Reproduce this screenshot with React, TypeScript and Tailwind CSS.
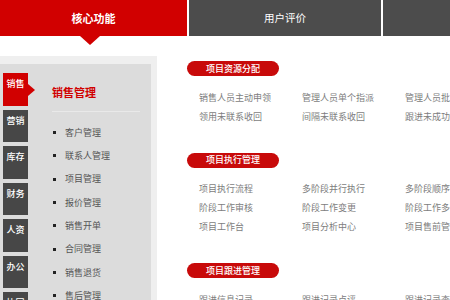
import React from "react";

const tabs = ["销售", "营销", "库存", "财务", "人资", "办公", "协同"];
const items = ["客户管理", "联系人管理", "项目管理", "报价管理", "销售开单", "合同管理", "销售退货", "售后管理"];

const sections: { title: string; rows: string[][] }[] = [
  {
    title: "项目资源分配",
    rows: [
      ["销售人员主动申领", "管理人员单个指派", "管理人员批量指派"],
      ["领用未联系收回", "间隔未联系收回", "跟进未成功收回"],
    ],
  },
  {
    title: "项目执行管理",
    rows: [
      ["项目执行流程", "多阶段并行执行", "多阶段顺序执行"],
      ["阶段工作审核", "阶段工作变更", "阶段工作多人协作"],
      ["项目工作台", "项目分析中心", "项目售前管理"],
    ],
  },
  {
    title: "项目跟进管理",
    rows: [["跟进信息记录", "跟进记录点评", "跟进记录查询"]],
  },
];

export default function App() {
  return (
    <div
      className="w-[450px] h-[300px] overflow-hidden bg-white"
      style={{ fontFamily: '"Noto Sans CJK SC", "Noto Sans", sans-serif' }}
    >
      {/* Top bar */}
      <div className="flex h-[36px] gap-[2px]">
        <div className="relative w-[187px] bg-[#d10000] flex items-center justify-center text-white text-[11px] font-bold">
          核心功能
          <div className="absolute left-[80px] -bottom-[9px] w-0 h-0 border-l-[10px] border-r-[10px] border-t-[9px] border-l-transparent border-r-transparent border-t-[#d10000]" />
        </div>
        <div className="w-[192px] bg-[#4c4c4c] flex items-center justify-center text-white text-[10.5px]">
          用户评价
        </div>
        <div className="flex-1 bg-[#4c4c4c]" />
      </div>

      <div className="flex mt-[20px]">
        {/* Left panel */}
        <div className="w-[157px] shrink-0 bg-[#efefef] pt-[8px] pr-[6px] h-[300px]">
          <div className="bg-[#dcdcdc] h-full flex pt-[9px] pl-[3px]">
            <div className="flex flex-col gap-[4px] w-[25px] shrink-0">
              {tabs.map((t, i) => (
                <div
                  key={t}
                  className={`relative h-[32.5px] pt-[4px] text-center text-white text-[9px] font-medium leading-[14px] ${
                    i === 0 ? "bg-[#d10000]" : "bg-[#474747]"
                  }`}
                >
                  {t}
                  {i === 0 && (
                    <div className="absolute -right-[7px] top-[11px] w-0 h-0 border-t-[6px] border-b-[6px] border-l-[7px] border-t-transparent border-b-transparent border-l-[#d10000]" />
                  )}
                </div>
              ))}
            </div>
            <div className="ml-[24px] flex-1 pr-[11px]">
              <div className="text-[#d10000] text-[11px] font-bold leading-[14px] mt-[12px]">销售管理</div>
              <div className="h-px bg-[#e9e9e9] mt-[12px]" />
              <div className="mt-[9px]">
                {items.map((it) => (
                  <div key={it} className="flex items-center h-[23.3px]">
                    <span className="w-[3px] h-[3px] bg-[#222] ml-[1px] mr-[9px]" />
                    <span className="text-[9px] text-[#555]">{it}</span>
                  </div>
                ))}
              </div>
            </div>
          </div>
        </div>

        {/* Right content */}
        <div className="ml-[30px] pt-[5px] flex flex-col gap-[26.5px] whitespace-nowrap">
          {sections.map((s) => (
            <div key={s.title}>
              <div className="w-[92px] h-[15px] rounded-full bg-[#c80a0a] text-white text-[9px] font-medium flex items-center justify-center">
                {s.title}
              </div>
              <div className="mt-[12px] ml-[12px]">
                {s.rows.map((r, i) => (
                  <div key={i} className="flex h-[19px] items-center">
                    {r.map((c) => (
                      <div key={c} className="w-[103px] shrink-0 text-[9px] text-[#7d7d7d]">
                        {c}
                      </div>
                    ))}
                  </div>
                ))}
              </div>
            </div>
          ))}
        </div>
      </div>
    </div>
  );
}
